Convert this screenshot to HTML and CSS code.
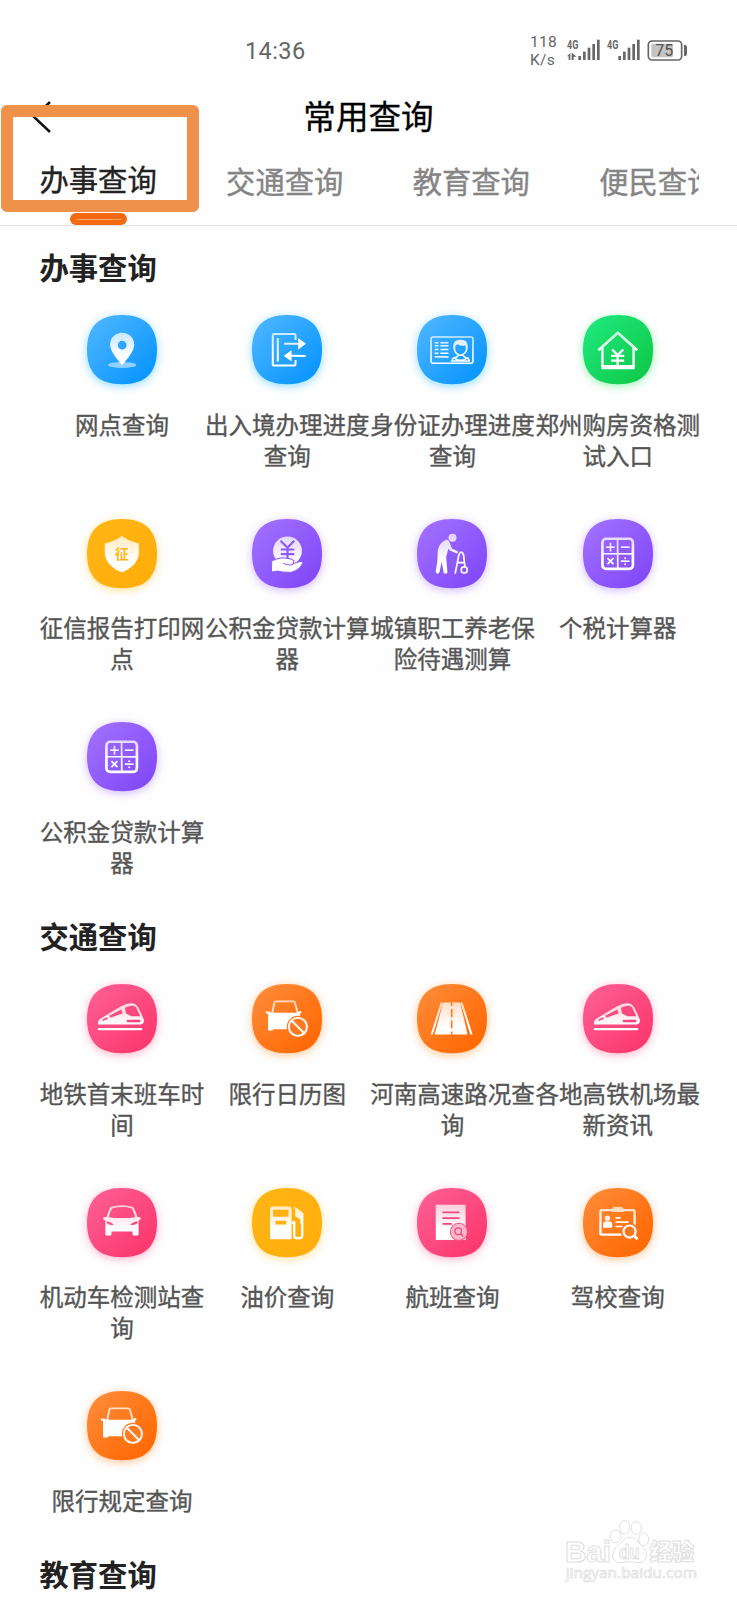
FILE: index.html
```
<!DOCTYPE html>
<html lang="zh-CN">
<head>
<meta charset="utf-8">
<title>常用查询</title>
<link rel="stylesheet" href="styles.css">
</head>
<body>
<svg class="defs" width="0" height="0" aria-hidden="true">
  <defs>
    <linearGradient id="blue" x1="0" y1="0" x2="1" y2="1"><stop offset=".1" stop-color="#4ab4ff"/><stop offset=".85" stop-color="#0d97ff"/></linearGradient>
    <linearGradient id="green" x1="0" y1="0" x2="1" y2="1"><stop offset=".1" stop-color="#1de77b"/><stop offset=".85" stop-color="#11cb4d"/></linearGradient>
    <linearGradient id="yellow" x1="0" y1="0" x2="1" y2="1"><stop offset=".1" stop-color="#ffb515"/><stop offset=".85" stop-color="#ffae0b"/></linearGradient>
    <linearGradient id="purple" x1="0" y1="0" x2="1" y2="1"><stop offset=".1" stop-color="#a06eff"/><stop offset=".85" stop-color="#834bf8"/></linearGradient>
    <linearGradient id="pink" x1="0" y1="0" x2="1" y2="1"><stop offset=".1" stop-color="#fd5c92"/><stop offset=".85" stop-color="#fb3a6f"/></linearGradient>
    <linearGradient id="orange" x1="0" y1="0" x2="1" y2="1"><stop offset=".1" stop-color="#ff8936"/><stop offset=".85" stop-color="#ff6a05"/></linearGradient>
    <linearGradient id="w" gradientUnits="userSpaceOnUse" x1="0" y1="48" x2="0" y2="125"><stop offset="0" stop-color="#fff" stop-opacity=".72"/><stop offset="1" stop-color="#fff"/></linearGradient>
    <path id="tile" d="M104.5 0C174 0 209 35 209 104S174 207 104.5 207 0 173 0 104 35 0 104.5 0z"/>
    <g id="train">
      <path fill-rule="evenodd" d="M33 113Q34 107 46 100L98 69Q122 54 140 58 149 61 156 76L169 104Q173 119 161 121H33zM46 106L59 99 63 104 46 111zM66 95L102 76 107 87 70 101zM113 71Q128 63 139 65 147 67 150 77L159 96H133L116 88zM119 107V114H159V107z" fill="url(#w)"/>
      <path d="M35 134.500H162" stroke="#fff" stroke-width="7" stroke-linecap="round"/>
    </g>
    <g id="banned">
      <path d="M60 88L67 55Q68 52 71 52H124Q127 52 128 55L137 88" fill="none" stroke="url(#w)" stroke-width="5.500"/>
      <path d="M41 82H51L57 86H137L143 80 149 84 143 89 145 100Q112 96 104 135H64L62 139H48V90L41 86z" fill="#fff"/>
      <circle cx="137" cy="128" r="33" fill="#ff7a20"/>
      <circle cx="137" cy="128" r="27" fill="none" stroke="#fff" stroke-width="5.500"/>
      <path d="M118 109L156 147" stroke="#fff" stroke-width="5.500"/>
    </g>
    <g id="calc" fill="none" stroke="url(#w)" stroke-width="5">
      <rect x="58" y="59" width="91" height="90" rx="11" stroke-width="8"/>
      <path d="M103.2 59L103.8 149M58 103.8L149 104.2M69 84L95 84.1M82 71L82.1 97M113 84L139 84.1M73 117L91 135M91 117L73 135M113 126L139 126.1"/>
      <circle cx="126" cy="117" r="3" fill="#fff" stroke="none"/><circle cx="126" cy="135" r="3" fill="#fff" stroke="none"/>
    </g>
  </defs>
</svg>

<div class="screen">
  <div class="status">
    <span class="clock">14:36</span>
    <div class="speed"><span>118</span><span>K/s</span></div>
    <svg class="signals" viewBox="0 0 366 90" role="img" aria-label="75%">
      <g fill="#666">
        <text x="0" y="36" class="net" textLength="34" lengthAdjust="spacingAndGlyphs">4G</text>
        <text x="120" y="36" class="net" textLength="34" lengthAdjust="spacingAndGlyphs">4G</text>
        <path d="M0 58L10 48V69H5V58zM14 47L29 59H20V69H14z"/>
        <rect x="34" y="57" width="8" height="12"/><rect x="48" y="44" width="8" height="25"/><rect x="62" y="32" width="8" height="37"/><rect x="76" y="21" width="8" height="48"/><rect x="90" y="8" width="8" height="61"/>
        <rect x="154" y="57" width="8" height="12"/><rect x="168" y="44" width="8" height="25"/><rect x="182" y="32" width="8" height="37"/><rect x="196" y="21" width="8" height="48"/><rect x="210" y="8" width="8" height="61"/>
      </g>
      <rect x="244" y="12" width="100" height="57" rx="11" fill="none" stroke="#666" stroke-width="5"/>
      <rect x="253" y="20" width="65" height="41" rx="5" fill="#c4c4c4"/>
      <text x="292" y="58" class="level">75</text>
      <path d="M351 24H354Q360 24 360 31V50Q360 57 354 57H351z" fill="#666"/>
    </svg>
  </div>

  <header class="header">
    <svg class="back" viewBox="0 0 20 34"><path d="M18 2L2 17 18 32" fill="none" stroke="#111" stroke-width="2.4"/></svg>
    <h1>常用查询</h1>
  </header>

  <nav class="tabs">
    <a class="tab active">办事查询</a>
    <a class="tab">交通查询</a>
    <a class="tab">教育查询</a>
    <a class="tab">便民查询</a>
  </nav>
  <div class="marker"></div>
  <div class="indicator"></div>

  <main>
    <h2>办事查询</h2>
    <div class="grid">
      <div class="item">
        <svg class="icon blue" viewBox="0 0 209 209"><use href="#tile" fill="url(#blue)"/><ellipse cx="105" cy="149" rx="42" ry="9" fill="#8fd0ff"/><path d="M105 53C84 53 69 69 69 89 69 107 87 129 105 150 123 129 141 107 141 89 141 69 126 53 105 53zM105 77A13 13 0 1 1 105 103 13 13 0 0 1 105 77z" fill="url(#w)"/></svg>
        <span>网点查询</span>
      </div>
      <div class="item">
        <svg class="icon blue" viewBox="0 0 209 209"><use href="#tile" fill="url(#blue)"/><g stroke="url(#w)" stroke-width="6" fill="none"><path d="M130 75V61Q130 57 126 57H66Q62 57 62 61V146Q62 151 66 151H126Q130 151 130 147V134M77 69L77.1 139M96 86L140 86.1M112 122L160 122.1"/></g><path d="M138 69L161 86 138 103zM118 105L95 122 118 139z" fill="#fff"/></svg>
        <span>出入境办理进度查询</span>
      </div>
      <div class="item">
        <svg class="icon blue" viewBox="0 0 209 209"><use href="#tile" fill="url(#blue)"/><g fill="none" stroke="url(#w)" stroke-width="4.500"><rect x="42" y="66" width="125" height="78" rx="6"/><path d="M53 83L64 83.1M70 83L94 83.1M53 92L64 92.1M70 92L94 92.1M53 103L64 103.1M70 103L94 103.1M53 114L64 114.1M70 114L94 114.1M53 125L94 125.1"/><path d="M113 90Q108 111 123 118 131 123 138 117 152 110 147 90M123 120Q121 127 108 129L104 137H156L153 129Q140 127 138 120M114 131Q130 139 147 131"/></g><path d="M109 103C106 84 113 73 130 74 147 72 154 84 150 103L144 90Q132 95 122 87L114 91z" fill="url(#w)"/></svg>
        <span>身份证办理进度查询</span>
      </div>
      <div class="item">
        <svg class="icon green" viewBox="0 0 209 209"><use href="#tile" fill="url(#green)"/><g fill="none" stroke="url(#w)" stroke-width="7"><path d="M46 105L104 53 162 105" stroke-width="8"/><path d="M58 96V154M151 96V154"/></g><path d="M55 149H154V162H55z" fill="#fff"/><path d="M87 103L103.500 120 120 103M103.500 118V151M84 122H123M84 136H123" fill="none" stroke="#fff" stroke-width="7"/></svg>
        <span>郑州购房资格测试入口</span>
      </div>
      <div class="item">
        <svg class="icon yellow" viewBox="0 0 209 209"><use href="#tile" fill="url(#yellow)"/><path d="M104 51C118 62 136 69 155 73V103C153 130 128 151 104 159 80 151 55 130 53 103V73C72 69 90 62 104 51z" fill="url(#w)"/><text x="104" y="118" class="seal">征</text></svg>
        <span>征信报告打印网点</span>
      </div>
      <div class="item">
        <svg class="icon purple" viewBox="0 0 209 209"><use href="#tile" fill="url(#purple)"/><circle cx="106" cy="95" r="43" fill="url(#w)"/><path d="M85 65L106 86 126 65M106 85V124M86 91H126M86 105H126" fill="none" stroke="#8e5bfb" stroke-width="6.500"/><path d="M59 125Q76 118 91 116L114 119 125 124 123 133 146 126 153 130Q142 154 120 158 97 161 76 155L58 158z" fill="#fff" stroke="#8e5bfb" stroke-width="3"/><path d="M94 132Q112 142 125 133" fill="none" stroke="#8e5bfb" stroke-width="3"/></svg>
        <span>公积金贷款计算器</span>
      </div>
      <div class="item">
        <svg class="icon purple" viewBox="0 0 209 209"><use href="#tile" fill="url(#purple)"/><circle cx="106" cy="56" r="12" fill="url(#w)"/><path d="M88 61Q97 62 100 77L104 88 122 96Q124 102 119 103L98 94 94 88 87 113 91 160Q90 164 84 163 79 163 79 158L74 127 67 159Q65 164 60 163 55 162 56 156L61 125 62 95Q65 71 88 61z" fill="url(#w)"/><g stroke="#fff" fill="none" stroke-width="5"><path d="M114 163L125 107Q133 91 139 107L143 142M119 130H142"/><circle cx="141" cy="152" r="9"/></g></svg>
        <span>城镇职工养老保险待遇测算</span>
      </div>
      <div class="item">
        <svg class="icon purple" viewBox="0 0 209 209"><use href="#tile" fill="url(#purple)"/><use href="#calc"/></svg>
        <span>个税计算器</span>
      </div>
      <div class="item">
        <svg class="icon purple" viewBox="0 0 209 209"><use href="#tile" fill="url(#purple)"/><use href="#calc"/></svg>
        <span>公积金贷款计算器</span>
      </div>
    </div>

    <h2>交通查询</h2>
    <div class="grid">
      <div class="item">
        <svg class="icon pink" viewBox="0 0 209 209"><use href="#tile" fill="url(#pink)"/><use href="#train"/></svg>
        <span>地铁首末班车时间</span>
      </div>
      <div class="item">
        <svg class="icon orange" viewBox="0 0 209 209"><use href="#tile" fill="url(#orange)"/><use href="#banned"/></svg>
        <span>限行日历图</span>
      </div>
      <div class="item">
        <svg class="icon orange" viewBox="0 0 209 209"><use href="#tile" fill="url(#orange)"/><path d="M78 55H129L151 151H53zM71 55H77L47 151H41zM130 55H136L166 151H159z" fill="url(#w)"/><path d="M103.500 55V65M103.500 75V99M103.500 109V132M103.500 142V151" stroke="#ff7920" stroke-width="5"/></svg>
        <span>河南高速路况查询</span>
      </div>
      <div class="item">
        <svg class="icon pink" viewBox="0 0 209 209"><use href="#tile" fill="url(#pink)"/><use href="#train"/></svg>
        <span>各地高铁机场最新资讯</span>
      </div>
      <div class="item">
        <svg class="icon pink" viewBox="0 0 209 209"><use href="#tile" fill="url(#pink)"/><path d="M70 57Q104 46 138 57 146 70 150 86L160 88V93L154 98V138Q154 142 149 142H141Q136 142 136 137V130H73V137Q73 142 68 142H60Q55 142 55 138V98L49 93V88L59 86Q63 70 70 57zM75 61Q68 73 65 87 105 92 144 87 140 73 134 61 104 53 75 61zM58 99Q59 112 80 110 75 102 58 99zM152 99Q134 102 129 110 150 112 152 99z" fill="url(#w)" fill-rule="evenodd"/></svg>
        <span>机动车检测站查询</span>
      </div>
      <div class="item">
        <svg class="icon yellow" viewBox="0 0 209 209"><use href="#tile" fill="url(#yellow)"/><path d="M61 55H111Q118 55 118 62V153H54V62Q54 55 61 55zM63 65V86H109V65zM70 98V109H102V98z" fill="url(#w)" fill-rule="evenodd"/><path d="M118 103H126V142Q126 150 136 150H142Q150 149 150 141V76" fill="none" stroke="#fff" stroke-width="7"/><path d="M126 55L152 73V106H144V94L129 84V70z" fill="url(#w)"/></svg>
        <span>油价查询</span>
      </div>
      <div class="item">
        <svg class="icon pink" viewBox="0 0 209 209"><use href="#tile" fill="url(#pink)"/><rect x="56" y="50" width="89" height="105" fill="url(#w)"/><path d="M76 73H127M76 90H127M76 107H104" stroke="#ef4a7c" stroke-width="5"/><circle cx="125" cy="131" r="27" fill="#f8507f"/><circle cx="125" cy="131" r="24" fill="#ffb9cd"/><circle cx="123" cy="129" r="10" fill="none" stroke="#ef4a7c" stroke-width="4"/><path d="M130 136L138 145" stroke="#ef4a7c" stroke-width="4"/></svg>
        <span>航班查询</span>
      </div>
      <div class="item">
        <svg class="icon orange" viewBox="0 0 209 209"><use href="#tile" fill="url(#orange)"/><rect x="52" y="66" width="102" height="73" rx="4" fill="none" stroke="url(#w)" stroke-width="7"/><path d="M85 63L91 57H116L122 63V72H85z" fill="#ffdcbe"/><circle cx="73" cy="90" r="8" fill="url(#w)"/><path d="M60 119V107Q60 100 67 100H80Q87 100 87 107V119z" fill="#fff"/><path d="M97 89H112M97 102H136M97 115H119" stroke="#fff" stroke-width="5"/><circle cx="139" cy="130" r="26" fill="#ff751a"/><path d="M152 142L163 153" stroke="#fff" stroke-width="8"/><circle cx="139" cy="130" r="18" fill="none" stroke="#fff" stroke-width="6.500"/></svg>
        <span>驾校查询</span>
      </div>
      <div class="item">
        <svg class="icon orange" viewBox="0 0 209 209"><use href="#tile" fill="url(#orange)"/><use href="#banned"/></svg>
        <span>限行规定查询</span>
      </div>
    </div>
    <h2>教育查询</h2>
  </main>

  <svg class="watermark" viewBox="0 0 420 200">
    <g fill="#fff" stroke="#e0e0e0" stroke-width="3">
      <text x="0" y="125" class="bai" textLength="138" lengthAdjust="spacingAndGlyphs">Bai</text>
      <ellipse cx="152" cy="49" rx="16" ry="19"/><ellipse cx="179" cy="22" rx="15" ry="20"/><ellipse cx="214" cy="24" rx="15" ry="20"/><ellipse cx="236" cy="58" rx="15" ry="19"/>
      <path d="M194 52C210 52 218 65 230 77 246 91 250 110 237 122 227 132 211 125 193 125 175 125 160 132 149 122 137 108 144 91 159 77 172 64 178 52 194 52z"/>
      <text x="162" y="117" class="du" textLength="62" lengthAdjust="spacingAndGlyphs">du</text>
      <text x="254" y="121" class="exp">经验</text>
      <text x="2" y="174" class="url" textLength="394" lengthAdjust="spacingAndGlyphs">jingyan.baidu.com</text>
    </g>
  </svg>
</div>
</body>
</html>
```
FILE: styles.css
```
* { box-sizing: border-box; }
body { margin: 0; background: #fff; }
.defs { position: absolute; }
.screen {
  position: relative;
  width: 737px;
  height: 1600px;
  overflow: hidden;
  background: #fefefe;
  font-family: "Noto Sans CJK SC", sans-serif;
}
.status {
  display: flex;
  height: 84px;
  padding: 33px 48px 0 245px;
  color: #666;
  font-family: Roboto, sans-serif;
}
.clock { width: 285px; font-size: 23.500px; line-height: 36px; letter-spacing: .4px; }
.speed {
  display: flex;
  flex-direction: column;
  width: 37px;
  font-size: 15.500px;
  line-height: 18px;
  letter-spacing: .3px;
}
.signals { flex: none; width: 122px; height: 30px; margin-top: 4px; }
.net { font: bold 36px Roboto, sans-serif; }
.level { font: 400 48px Roboto, sans-serif; fill: #505050; text-anchor: middle; }

.header { display: flex; align-items: center; height: 66px; padding-left: 32px; }
.back { width: 20px; height: 34px; }
h1 {
  flex: 1;
  margin: -4px 52px 0 0;
  color: #000;
  font-size: 32.600px;
  font-weight: 400;
  line-height: 48px;
  text-align: center;
  -webkit-text-stroke: .3px #000;
}
.tabs {
  display: flex;
  gap: 69.400px;
  height: 76px;
  padding: 10px 0 0 39.500px;
  border-bottom: 1px solid #e4e4e4;
}
.tab {
  flex: none;
  color: #858585;
  font-size: 29.300px;
  line-height: 40px;
  white-space: nowrap;
  -webkit-text-stroke: .4px currentColor;
}
.tab.active { margin-top: -2px; color: #222; }
.tab:last-child { width: 100px; overflow: hidden; }
.indicator {
  position: absolute;
  left: 70px;
  top: 213px;
  width: 57px;
  height: 12px;
  border-radius: 6px;
  background: linear-gradient(#ffa868, #ffa868) center / 45px 1px no-repeat, #f3690f;
}
.marker {
  position: absolute;
  left: 1px;
  top: 105px;
  width: 198px;
  height: 107px;
  border: 12px solid #f0914b;
  border-radius: 6px;
}

main { padding: 20px 36px 0 39.500px; }
h2 { margin: 0 0 29px; color: #222; font-size: 29.300px; font-weight: 700; line-height: 40px; }
.grid {
  display: grid;
  grid-template-columns: repeat(4, 165.200px);
  row-gap: 48px;
  margin-bottom: 37.500px;
}
.item { display: flex; flex-direction: column; align-items: center; gap: 23.500px; }
.item span {
  width: 165.200px;
  color: #555;
  font-size: 23.500px;
  line-height: 31px;
  text-align: center;
  -webkit-text-stroke: .35px #555;
}
.icon { width: 70px; height: 70px; overflow: visible; }
.blue { filter: drop-shadow(0 2px 4px #8fdcff); }
.green { filter: drop-shadow(0 2px 4px #9af5b5); }
.yellow { filter: drop-shadow(0 2px 4px #ffe49a); }
.purple { filter: drop-shadow(0 2px 4px #d2b8ff); }
.pink { filter: drop-shadow(0 2px 4px #ffb5cb); }
.orange { filter: drop-shadow(0 2px 4px #ffc795); }
.seal { font: 700 42px "Noto Sans CJK SC", sans-serif; fill: #ffb320; text-anchor: middle; }

.watermark { position: absolute; left: 565px; top: 1520px; width: 140px; height: 66.700px; overflow: visible; }
.bai { font: 700 86px "Liberation Sans", sans-serif; }
.du { font: 700 58px "Liberation Sans", sans-serif; }
.exp { font: 900 67px "Noto Sans CJK SC", sans-serif; }
.url { font: 400 44px "Open Sans", sans-serif; stroke-width: 2; }
```
